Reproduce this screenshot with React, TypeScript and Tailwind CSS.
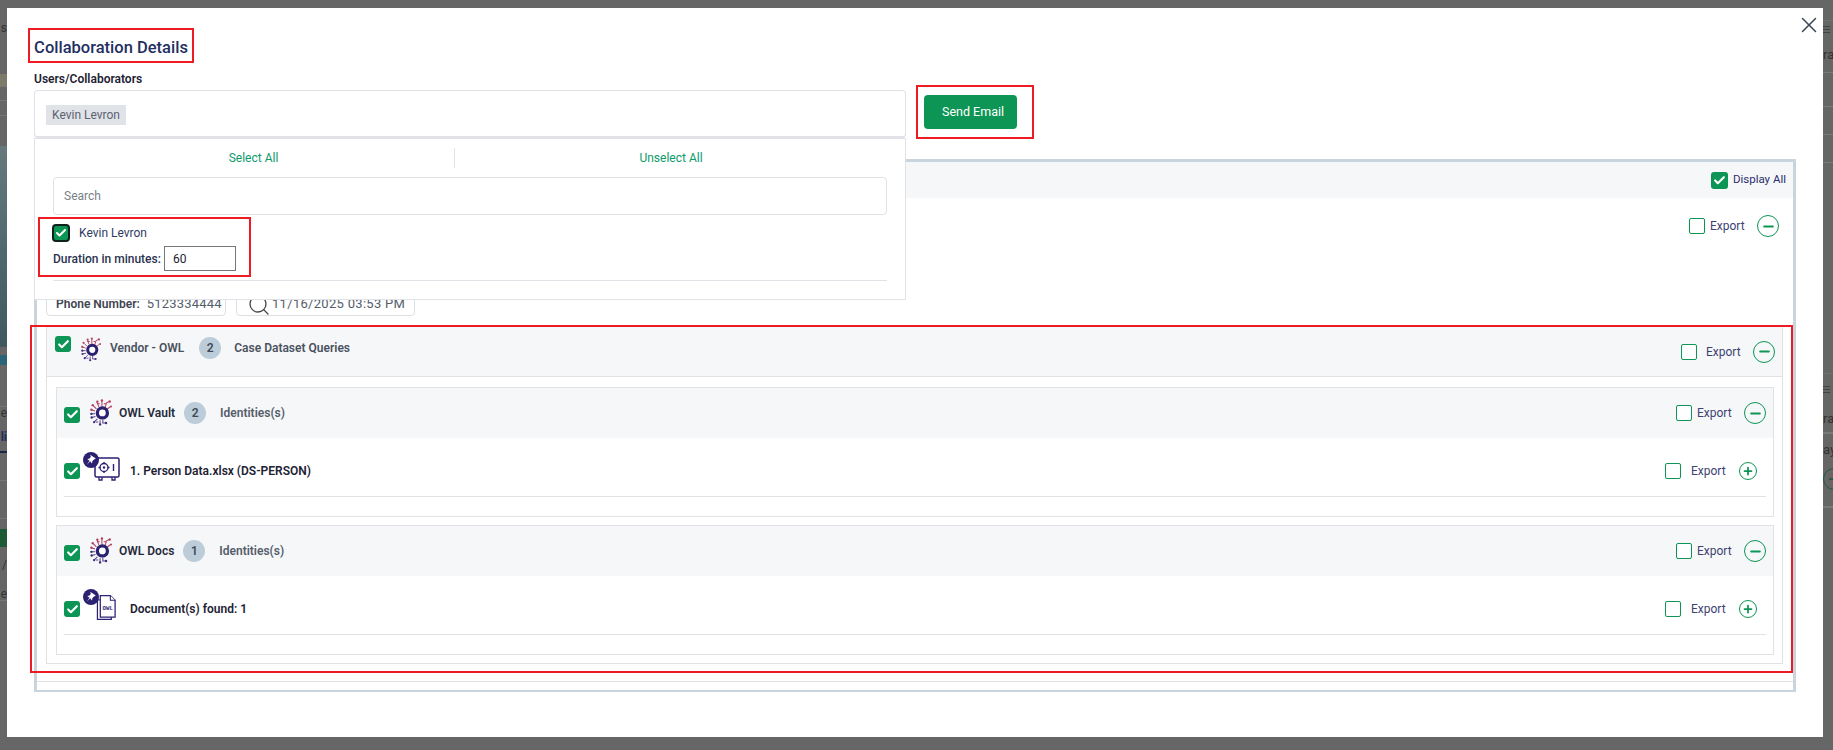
import React from 'react';
import { Check, Minus, Plus, X, Search } from 'lucide-react';

const Tick: React.FC<{ className?: string }> = ({ className = '' }) => (
    <span className={`flex items-center justify-center rounded-[3px] bg-[#0c9554] shrink-0 ${className}`}>
        <Check size={13} strokeWidth={4} className="text-white" />
    </span>
);

const ExportBox: React.FC<{ gap: string; right: string; plus?: boolean; boxClass?: string }> = ({ gap, right, plus, boxClass = 'w-4 h-4' }) => (
    <div className="flex items-center">
        <span className={`${boxClass} rounded-[2px] border border-[#0c9554] bg-white`} />
        <span className={`${gap} w-[34px] text-[12px] text-[#3d4272]`}>Export</span>
        <span className={`${right} flex items-center justify-center rounded-full border border-[#0c9554] text-[#0c9554] ${plus ? 'w-[18px] h-[18px]' : 'w-[22px] h-[22px]'}`}>
            {plus ? <Plus size={12} strokeWidth={3.5} /> : <Minus size={15} strokeWidth={3} />}
        </span>
    </div>
);

const Badge: React.FC<{ n: number; className?: string }> = ({ n, className = '' }) => (
    <span className={`flex items-center justify-center w-[22px] h-[22px] rounded-full bg-[#bccdd9] text-[12px] font-semibold text-[#3f4a57] ${className}`}>{n}</span>
);

const OwlMark: React.FC<{ className?: string }> = ({ className = '' }) => (
    <svg viewBox="0 0 24 30" className={className} fill="none">
        <g stroke="#b8405c" strokeWidth="1.1">
            <path d="M13 9V3M9.500 9.500 8 4.500M16.500 10 18 5l3-1.500M18.500 12l4-3" />
            <path d="M7 11.500 3.500 8M5.500 14 1.500 12.500M10.500 6H7.500M15 6h2.500" stroke="#a63a68" />
        </g>
        <g stroke="#5a3f88" strokeWidth="1.1">
            <path d="M5.500 17H1M6 20l-4 1M8 22.500 4.500 26M11 24v4M14 23.500V27h3.500M9 26H6.500" />
        </g>
        <g fill="#b8405c">
            <circle cx="13" cy="2.500" r="1.300" />
            <circle cx="8" cy="3.800" r="1.300" />
            <circle cx="21.500" cy="3.500" r="1.300" />
            <circle cx="23" cy="9" r="1.100" />
            <circle cx="3" cy="7.500" r="1.300" />
            <circle cx="1.500" cy="12.500" r="1.300" />
        </g>
        <g fill="#3d2f7c">
            <circle cx="1.500" cy="17" r="1.300" />
            <circle cx="1.800" cy="21" r="1.300" />
            <circle cx="4.500" cy="26" r="1.300" />
            <circle cx="11" cy="28.500" r="1.300" />
            <circle cx="17.500" cy="27" r="1.300" />
        </g>
        <circle cx="13.500" cy="16" r="5.500" stroke="#2a2170" strokeWidth="3.600" fill="#fff" />
    </svg>
);

const PinBadge: React.FC = () => (
    <svg viewBox="0 0 16 16" className="absolute left-0 top-0 w-4 h-4">
        <circle cx="8" cy="8" r="8" fill="#2a2170" />
        <path d="M7.200 2.800 12.800 6.600l-1.700 1-1.700 1.500-.4 2.400-1.900-2.200-3.300 3.400 2.700-4-2.200-1.800 2.400-.4 1.100-1.700z" fill="#fff" />
    </svg>
);

const SafeIcon: React.FC = () => (
    <span className="relative block w-[36px] h-[30px] shrink-0">
        <svg viewBox="0 0 26 24" className="absolute left-[11px] top-[5px] w-[26px] h-[24px]" fill="none" stroke="#2a2170">
            <rect x="1" y="1" width="24" height="19" rx="1.500" strokeWidth="1.500" />
            <path d="M5 20v3h3v-3M18 20v3h3v-3" strokeWidth="1.300" />
            <circle cx="10" cy="10.500" r="4" strokeWidth="1.300" />
            <circle cx="10" cy="10.500" r="1.200" fill="#2a2170" stroke="none" />
            <path d="M10 5v2M10 14v2M4.500 10.500h2M13.500 10.500h2M19.500 7v7" strokeWidth="1.400" />
        </svg>
        <PinBadge />
    </span>
);

const DocIcon: React.FC = () => (
    <span className="relative block w-[36px] h-[32px] shrink-0">
        <svg viewBox="0 0 22 28" className="absolute left-[13px] top-[5px] w-[21px] h-[27px]" fill="#fff" stroke="#2a2170">
            <path d="M4 6H1.500v20.500H16V24" strokeWidth="1.300" />
            <path d="M4.500 1.500H15l5 5v17.500H4.500z" strokeWidth="1.300" />
            <path d="M15 1.500v5h5" strokeWidth="1.100" />
            <text x="12.300" y="17" textAnchor="middle" fontSize="6" fontWeight="700" fill="#2a2170" stroke="none" fontFamily="Liberation Mono, monospace">OWL</text>
        </svg>
        <PinBadge />
    </span>
);

const SubCard: React.FC<{
    name: string;
    count: number;
    gapBadge: string;
    icon: React.ReactNode;
    label: string;
    className?: string;
}> = ({ name, count, gapBadge, icon, label, className = '' }) => (
    <div className={`border border-[#e0e2e6] ${className}`}>
        <div className="h-[50px] bg-[#f6f7f9] flex items-center pl-[7px] pr-[7px]">
            <Tick className="w-4 h-4 mt-[3px]" />
            <OwlMark className="ml-[10px] w-[22px] h-[28px] -mt-[3px]" />
            <span className="ml-[7px] text-[12px] font-semibold text-[#252a3a] whitespace-nowrap">{name}</span>
            <Badge n={count} className={gapBadge} />
            <span className="ml-[14px] text-[12px] font-semibold text-[#555d6b]">Identities(s)</span>
            <div className="ml-auto">
                <ExportBox gap="ml-[5px]" right="ml-[13px]" />
            </div>
        </div>
        <div className="h-[58px] pt-[8px] flex items-center pl-[7px] pr-[16px]">
            <Tick className="w-4 h-4" />
            <span className="ml-[3px] -mt-[8px]">{icon}</span>
            <span className="ml-[11px] text-[12px] font-semibold text-[#1d2233] whitespace-nowrap">{label}</span>
            <div className="ml-auto">
                <ExportBox gap="ml-[10px]" right="ml-[14px]" plus />
            </div>
        </div>
        <div className="mx-[7px] h-px bg-[#e0e2e6]" />
        <div className="h-[19px]" />
    </div>
);

const LeftStrip: React.FC = () => (
    <div className="w-[7px] shrink-0 flex flex-col overflow-hidden text-[12px] leading-none text-[#333]">
        <div className="h-[74px] bg-[#666] pt-[22px] flex justify-end"><span>s</span></div>
        <div className="h-[13px] bg-[#7d7a69]" />
        <div className="h-[14px] bg-[#666] border-b border-[#757575]" />
        <div className="h-[15px] bg-[#666] border-b border-[#757575]" />
        <div className="h-[30px] bg-[#666]" />
        <div className="h-[201px] bg-gradient-to-b from-[#66797d] via-[#50696f] to-[#40585f]" />
        <div className="h-[8px] bg-[#666]" />
        <div className="h-[10px] bg-[#2b6478]" />
        <div className="h-[42px] bg-[#666] border-b border-[#757575]" />
        <div className="h-[24px] bg-[#666] flex justify-end"><span>e</span></div>
        <div className="h-[22px] bg-[#666] border-b-2 border-[#1d2347] flex justify-end"><span className="font-bold text-[#20305a]">li</span></div>
        <div className="h-[28px] bg-[#666] border-b border-[#757575]" />
        <div className="h-[38px] bg-[#666] border-b border-[#757575]" />
        <div className="h-[18px] mt-[10px] bg-[#1c5b36]" />
        <div className="h-[24px] bg-[#666] flex justify-end items-end"><span>/</span></div>
        <div className="h-[30px] bg-[#666] flex justify-end items-end border-b border-[#757575]"><span>e</span></div>
        <div className="flex-1 bg-[#666]" />
    </div>
);

const RightStrip: React.FC = () => (
    <div className="w-[10px] shrink-0 flex flex-col overflow-hidden text-[13px] leading-none text-[#333] bg-[#666]">
        <div className="h-[21px] border-b border-[#717171]" />
        <div className="h-[16px] flex flex-col justify-center gap-[2px]">
            <span className="block h-px w-[7px] bg-[#444]" />
            <span className="block h-px w-[7px] bg-[#444]" />
            <span className="block h-px w-[7px] bg-[#444]" />
        </div>
        <div className="h-[36px] border-b border-[#7a7a7a] flex items-center"><span className="whitespace-nowrap">ra</span></div>
        <div className="h-[30px] border-b border-[#7a7a7a] mt-[4px]" />
        <div className="h-[28px] border-b border-[#7a7a7a]" />
        <div className="h-[28px] border-b border-[#7a7a7a]" />
        <div className="h-[211px] border-b border-[#717171]" />
        <div className="h-[30px] flex flex-col justify-center gap-[2px]">
            <span className="block h-px w-[7px] bg-[#444]" />
            <span className="block h-px w-[7px] bg-[#444]" />
            <span className="block h-px w-[7px] bg-[#444]" />
        </div>
        <div className="h-[30px] border-b-2 border-[#7a7a7a] flex items-center"><span>ra</span></div>
        <div className="h-[30px] flex items-center"><span>ay</span></div>
        <div className="h-[30px] flex items-center">
            <span className="flex items-center justify-center w-[22px] h-[22px] rounded-full border border-[#1c5b3a] text-[#1c5b3a] shrink-0"><Plus size={14} strokeWidth={3} /></span>
        </div>
        <div className="h-[14px] border-b-2 border-[#7a7a7a]" />
    </div>
);

export default function App() {
    return (
        <div className="h-[750px] w-[1833px] flex overflow-hidden bg-[#666] font-['Roboto',sans-serif]">
            <LeftStrip />
            <div className="flex-1 pt-2 pb-[13px] min-w-0">
                <div className="relative h-full bg-white">
                    <button className="absolute right-[1px] top-[4px] text-[#3c4a5a]">
                        <X size={26} strokeWidth={1.4} />
                    </button>

                    <div className="pt-5 pl-[21px]">
                        <div className="w-[166px] h-[35px] border-2 border-[#ed1c24] flex items-center justify-center pt-[6px]">
                            <h1 className="text-[16.5px] font-medium text-[#1f2f5f] whitespace-nowrap">Collaboration Details</h1>
                        </div>
                    </div>

                    <div className="pl-[27px]">
                        <label className="block mt-[9px] h-[18px] text-[12px] leading-[14px] font-semibold text-[#1d2233]">Users/Collaborators</label>

                        <div className="flex h-[48px]">
                            <div className="relative w-[872px] h-[48px]">
                                <div className="h-[48px] border border-[#e0e2e8] border-b-2 rounded-[4px] pl-[11px] pt-[11px]">
                                    <span className="inline-flex items-center justify-center w-[80px] h-[20px] bg-[#e0e3e8] text-[12px] text-[#5a6270]">Kevin Levron</span>
                                </div>

                                <div className="absolute left-0 top-[48px] z-10 w-[872px] h-[162px] bg-white border border-[#e0e2e8] px-[18px] pt-[9px]">
                                    <div className="flex h-[20px] text-[12px] text-[#0c9a6a]">
                                        <div className="w-[402px] flex items-center justify-center border-r border-[#e0e2e8]">Select All</div>
                                        <div className="flex-1 flex items-center justify-center">Unselect All</div>
                                    </div>
                                    <input
                                        readOnly
                                        placeholder="Search"
                                        className="block mt-[9px] w-full h-[38px] border border-[#e0e2e8] rounded-[4px] px-[10px] text-[12px] outline-none placeholder:text-[#7b7f86]"
                                    />
                                    <div className="mt-[2px] -ml-[15px] w-[213px] h-[60px] border-2 border-[#ed1c24] pl-[12px] pt-[5px]">
                                        <div className="flex items-center h-[18px]">
                                            <span className="flex items-center justify-center w-[18px] h-[18px] rounded-[4px] bg-[#0c9554] border-2 border-[#10201a] shrink-0">
                                                <Check size={12} strokeWidth={4} className="text-white" />
                                            </span>
                                            <span className="ml-[9px] text-[12px] text-[#2f3a63]">Kevin Levron</span>
                                        </div>
                                        <div className="flex items-center mt-[4px] h-[25px]">
                                            <span className="ml-[1px] w-[111px] text-[12px] font-medium text-[#2a3350] whitespace-nowrap">Duration in minutes:</span>
                                            <input readOnly value="60" className="w-[72px] h-[25px] border border-[#777] px-2 text-[12px] text-[#20242c] outline-none" />
                                        </div>
                                    </div>
                                    <div className="mt-[3px] h-px bg-[#e0e2e8]" />
                                </div>
                            </div>

                            <div className="ml-[10px] -mt-[5px] w-[118px] h-[54px] shrink-0 border-2 border-[#ed1c24] pl-[6px] pt-[8px]">
                                <button className="w-[93px] h-[34px] pl-[5px] bg-[#0c9554] rounded-[4px] text-[12.5px] text-white">Send Email</button>
                            </div>
                        </div>

                        <div className="mt-[21px] w-[1762px] h-[533px] border-x-[3px] border-t-[3px] border-b-2 border-[#c9d4dc]">
                            <div className="h-[36px] bg-[#f6f7f9] flex items-center justify-end pr-[7px]">
                                <Tick className="w-[17px] h-[17px]" />
                                <span className="ml-[5px] text-[11.5px] text-[#2b2d6e]">Display All</span>
                            </div>
                            <div className="h-[484px] border-b border-[#e0e2e6]">
                                <div className="h-[127px] pt-[17px]">
                                    <div className="flex justify-end pr-[14px]">
                                        <ExportBox gap="ml-[5px]" right="ml-[13px]" />
                                    </div>
                                    <div className="flex mt-[53px] ml-[9px] gap-[10px]">
                                        <div className="w-[180px] h-[26px] border border-[#dcdfe4] rounded-[4px] pl-[9px] flex items-center pt-[2px] text-[13px] tracking-[0.2px] text-[#555d6b]">
                                            <span className="text-[12px] tracking-normal font-semibold text-[#3f4552]">Phone Number:</span>
                                            <span className="ml-[7px]">5123334444</span>
                                        </div>
                                        <div className="w-[179px] h-[26px] border border-[#dcdfe4] rounded-[4px] pl-[10px] flex items-center text-[13px] tracking-[0.3px] text-[#555d6b] overflow-hidden">
                                            <Search size={24} strokeWidth={1.3} className="text-[#444] shrink-0 -mb-[3px]" />
                                            <span className="ml-[1px] pt-[2px] whitespace-nowrap">11/16/2025 03:53 PM</span>
                                        </div>
                                    </div>
                                </div>

                                <div className="-ml-[7px] border-2 border-[#ed1c24] pl-[14px] pr-[8px] h-[348px] relative">
                                    <div className="h-[337px] border border-t-0 border-[#e0e2e6] pl-[9px] pr-[8px]">
                                        <div className="-mx-[9px] -mr-[8px] h-[50px] bg-[#f6f7f9] border-b border-[#e0e2e6] flex pl-[8px] pr-[7px]">
                                            <Tick className="w-4 h-4 mt-[9px]" />
                                            <OwlMark className="ml-[10px] mt-[9px] w-[20px] h-[26px]" />
                                            <div className="flex items-start pt-[10px]">
                                                <span className="ml-[9px] text-[12px] leading-[22px] font-semibold text-[#4a5260] whitespace-nowrap">Vendor - OWL</span>
                                                <Badge n={2} className="ml-[15px]" />
                                                <span className="ml-[13px] text-[12px] leading-[22px] font-semibold text-[#4a5260]">Case Dataset Queries</span>
                                            </div>
                                            <div className="ml-auto flex items-center">
                                                <ExportBox gap="ml-[9px]" right="ml-[13px]" />
                                            </div>
                                        </div>
                                        <SubCard name="OWL Vault" count={2} gapBadge="ml-[9px]" icon={<SafeIcon />} label="1. Person Data.xlsx (DS-PERSON)" className="mt-[10px]" />
                                        <SubCard name="OWL Docs" count={1} gapBadge="ml-[9px]" icon={<DocIcon />} label="Document(s) found: 1" className="mt-[8px]" />
                                    </div>
                                </div>
                            </div>
                        </div>
                    </div>
                </div>
            </div>
            <RightStrip />
        </div>
    );
}
